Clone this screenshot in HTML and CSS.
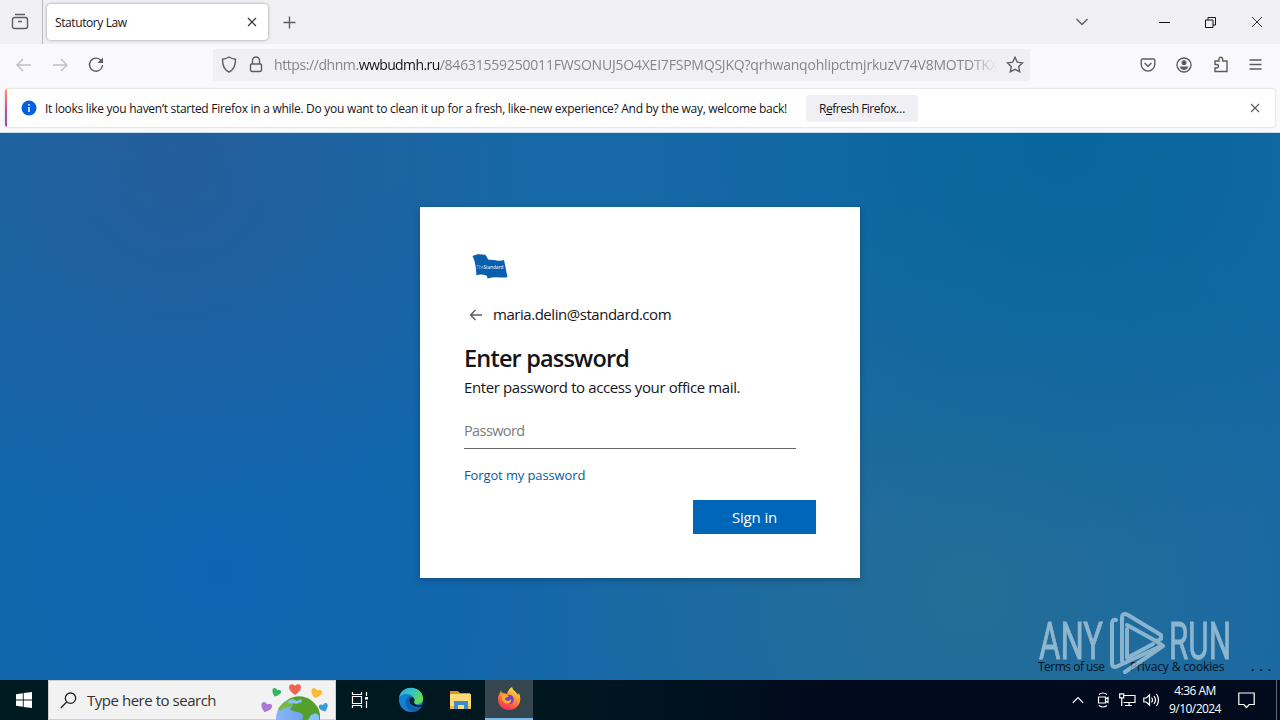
FILE: index.html
```html
<!DOCTYPE html>
<html lang="en">
<head>
<meta charset="utf-8">
<title>Desktop</title>
<link rel="stylesheet" href="styles.css">
</head>
<body>
<div class="desktop">
  <div class="tabbar">
    <div class="firefox-view"><svg class="ico" width="18" height="18" viewBox="0 0 18 18"><path d="M4 1.5h10M3.500 4.500h11a2 2 0 0 1 2 2v7a2 2 0 0 1-2 2h-11a2 2 0 0 1-2-2v-7a2 2 0 0 1 2-2zM7 8.500h4"/></svg></div>
    <div class="tab"><span class="tab-title">Statutory Law</span><svg class="ico dark" width="10" height="10" viewBox="0 0 10 10"><path d="M1 1l8 8M9 1l-8 8"/></svg></div>
    <svg class="ico new-tab" width="13" height="13" viewBox="0 0 13 13"><path d="M6.500 .5v12M.5 6.500h12"/></svg>
    <div class="window-controls">
      <svg class="ico" width="14" height="10" viewBox="0 0 14 10"><path d="M1.500 2l5.500 5.500L12.500 2"/></svg>
      <svg class="ico black min" width="11" height="11" viewBox="0 0 11 11"><path d="M0 5.500h11"/></svg>
      <svg class="ico black" width="11" height="11" viewBox="0 0 11 11"><path d="M.5 3h7.500v7.500H.5zM3 3V.5h7.500V8H8"/></svg>
      <svg class="ico thin" width="12" height="12" viewBox="0 0 12 12"><path d="M1 1l10 10M11 1L1 11"/></svg>
    </div>
  </div>

  <div class="toolbar">
    <svg class="ico faded" width="16" height="14" viewBox="0 0 16 14"><path d="M15 7H1.500M7 1L1 7l6 6"/></svg>
    <svg class="ico faded forward" width="16" height="14" viewBox="0 0 16 14"><path d="M1 7h13.500M9 1l6 6-6 6"/></svg>
    <svg class="ico reload" width="16" height="16" viewBox="0 0 16 16"><path d="M13 3.500A6.500 6.500 0 1 0 14.500 8"/><path class="fill" d="M15 .5v5.500H9.500z"/></svg>
    <div class="urlbar">
      <svg class="ico" width="16" height="17" viewBox="0 0 16 17"><path d="M8 1c2 1.300 4 2 6.500 2.300C14.600 10 12.500 14 8 16 3.500 14 1.400 10 1.500 3.300 4 3 6 2.300 8 1z"/></svg>
      <svg class="ico lock" width="14" height="17" viewBox="0 0 14 17"><path d="M3.500 8V4.500a3.500 3.500 0 0 1 7 0V8M2.500 8h9a1 1 0 0 1 1 1v5a1.500 1.500 0 0 1-1.500 1.500H3A1.500 1.500 0 0 1 1.500 14V9a1 1 0 0 1 1-1z"/></svg>
      <div class="url"><span class="scheme">https://dhnm.</span><b>wwbudmh.ru</b>/84631559250011FWSONUJ5O4XEI7FSPMQSJKQ?qrhwanqohlipctmjrkuzV74V8MOTDTKXX</div>
      <svg class="ico" width="18" height="17" viewBox="0 0 18 17"><path d="M9 1.300l2.300 4.900 5.200.7-3.800 3.700 1 5.200L9 13.300l-4.700 2.500 1-5.200L1.500 6.900l5.200-.7z"/></svg>
    </div>
    <div class="tools">
      <svg class="ico" width="16" height="14" viewBox="0 0 16 14"><path d="M2.500 1h11a1.300 1.300 0 0 1 1.300 1.300v4A6.700 6.700 0 0 1 1.200 6.300v-4A1.300 1.300 0 0 1 2.500 1zM4.500 5L8 8.300 11.500 5"/></svg>
      <svg class="ico" width="16" height="16" viewBox="0 0 16 16"><circle cx="8" cy="8" r="7"/><circle class="fill" cx="8" cy="5.800" r="2.500"/><path class="fill" d="M3.600 9.500h8.800c-.5 2.300-2.300 3.500-4.400 3.500s-3.900-1.200-4.400-3.500z"/></svg>
      <svg class="ico" width="16" height="17" viewBox="0 0 16 17"><path d="M2 5h4V3a1.800 1.800 0 0 1 3.600 0v2H14v10.500H2V12h1.700a1.700 1.700 0 0 0 0-3.500H2z"/></svg>
      <svg class="ico" width="13" height="11" viewBox="0 0 13 11"><path d="M.5 1h12M.5 5.500h12M.5 10h12"/></svg>
    </div>
  </div>

  <div class="notice-area">
    <div class="notice">
      <svg class="info" width="16" height="16" viewBox="0 0 16 16"><circle cx="8" cy="8" r="7.500" fill="#0560df"/><path d="M8 7v5M8 4v1.600" stroke="#fff" stroke-width="1.500"/></svg>
      <span class="notice-text">It looks like you haven’t started Firefox in a while. Do you want to clean it up for a fresh, like-new experience? And by the way, welcome back!</span>
      <div class="refresh"><span>R<u>e</u>fresh Firefox…</span></div>
      <svg class="ico notice-close" width="10" height="10" viewBox="0 0 10 10"><path d="M1 1l8 8M9 1L1 9"/></svg>
    </div>
  </div>

  <div class="page">
    <div class="card">
      <svg class="flag" width="36" height="25" viewBox="0 0 36 25"><path fill="#0b5dad" d="M.5 2C6-1 9 .5 13 .8c2 1 1.500 3 3.500 5C22 5 27 8 32 6L35.500 23c-5 1.700-11-1.500-20 1.500l-.6-2.800C10 20 7 20 4.500 21.500 4 14 3.500 8 .5 2z"/><text x="4.500" y="14.500" font-size="5" textLength="7" lengthAdjust="spacingAndGlyphs" fill="#9fc4e6">The</text><text x="11.500" y="14.500" font-size="6" textLength="20" lengthAdjust="spacingAndGlyphs" fill="#fff">Standard</text></svg>
      <div class="identity">
        <svg class="ico" width="14" height="12" viewBox="0 0 14 12"><path d="M13 6H1.500M6.500 1l-5 5 5 5"/></svg>
        <span class="email">maria.delin@standard.com</span>
      </div>
      <div class="heading"><span>Enter password</span></div>
      <div class="desc"><span>Enter password to access your office mail.</span></div>
      <div class="field"><span>Password</span></div>
      <div class="forgot"><span>Forgot my password</span></div>
      <div class="signin"><span>Sign in</span></div>
    </div>
    <div class="footer"><span class="terms">Terms of use</span><span class="privacy">Privacy &amp; cookies</span><span class="dots">...</span></div>
    <svg class="watermark" width="196" height="66" viewBox="0 0 196 66">
      <g fill="#c2d9e6" stroke="#c2d9e6" stroke-width=".9"><text x="1" y="49" font-size="52" textLength="64" lengthAdjust="spacingAndGlyphs">ANY</text><text x="131" y="49" font-size="52" textLength="62" lengthAdjust="spacingAndGlyphs">RUN</text></g>
      <g fill="none" stroke="#bdd6e5" stroke-width="4" stroke-linejoin="round" stroke-linecap="round"><path d="M78 10q-4-1-4 4v39q0 6 6 3l43-20"/><path d="M84 51V8q0-6 6-3l33 20v4l-5 2L89 15"/><path d="M89 19v29l26-14"/><path d="M118 31l7 5-38 26"/></g>
    </svg>
  </div>

  <div class="taskbar">
    <div class="start"><svg width="16" height="16" viewBox="0 0 16 16"><path fill="#fff" d="M0 2.200L6.800 1.200v6.300H0zM7.700 1.100L16 0v7.500H7.700zM0 8.400h6.800v6.400L0 13.800zM7.700 8.400H16V16l-8.300-1.100z"/></svg></div>
    <div class="search">
      <svg class="mag" width="17" height="17" viewBox="0 0 17 17"><circle cx="10.500" cy="6.200" r="5.200"/><path d="M6.700 10L.8 16"/></svg>
      <span>Type here to search</span>
      <svg class="earth" width="74" height="39" viewBox="0 0 74 39">
        <defs><path id="heart" d="M0 5C-4 2-6 0-6-3-6-6-2-7 0-4 2-7 6-6 6-3 6 0 4 2 0 5z"/><linearGradient id="sea"><stop offset="0" stop-color="#8bb6f7"/><stop offset="1" stop-color="#5f94e8"/></linearGradient></defs>
        <circle cx="37" cy="38" r="22" fill="url(#sea)"/>
        <path fill="#559f2c" d="M27 19c6-5 17-5 24 1 5 4 8 9 8 15v4H41c2-3 1-5-1-7-4-2-9-1-11-4l3-3-2-2-5 1-2-1z"/><path fill="#75ba3d" d="M22 22l8-4 5 2-4 5-8 2-4 3-2-2z"/><path fill="#86c2f4" d="M27 20l5-2 4 2 4-2 1 3-6 2-3-1-4 1zM47 39l3-5 5-2 3 3v4z"/>
        <use href="#heart" x="34" y="9" fill="#ed6552"/><use href="#heart" transform="translate(15 12) rotate(22) scale(.75)" fill="#35b564"/><use href="#heart" transform="translate(55 13) rotate(18) scale(.9)" fill="#f5bd32"/><use href="#heart" transform="translate(5 27) rotate(18) scale(.9)" fill="#ad78d2"/><use href="#heart" transform="translate(63 27) rotate(-20) scale(.75)" fill="#3a9bdc"/>
      </svg>
    </div>
    <div class="app"><svg class="white taskview" width="18" height="16" viewBox="0 0 18 16"><path d="M1.500 0v2.500h9V0M1.500 16v-2.500h9V16M1.500 4.500h9v7h-9zM15.500 0v4M15.500 9v7"/><path class="wfill" d="M14 5h3v2.500h-3z"/></svg></div>
    <div class="app edge"><svg width="26" height="26" viewBox="0 0 26 26"><defs><linearGradient id="eg" x1="0" y1="0" x2="1" y2=".5"><stop offset="0" stop-color="#28a9df"/><stop offset=".55" stop-color="#35c3c1"/><stop offset="1" stop-color="#64dc4d"/></linearGradient></defs><circle cx="13" cy="13" r="12" fill="#1381d2"/><path fill="url(#eg)" d="M1 11C3-3 24-2 25 11c.4 5-4 7-8 6-3-.7-1-2-1-4 0-7-12-8-15-2z"/><path fill="#1261b0" d="M10 10c-5 5-2 13 5 15 4-.3 7-2 9-6-6 3-12 1-13-4 0-2 1-4 3-5-1-1-3-1-4 0z"/><path fill="#06243a" d="M12 11c3-2 6 1 4 4 0 3 5 4 8 2.500 0 .7-.5 1.500-1 2-6 2-14-2-11-8.500z"/></svg></div>
    <div class="app"><svg width="23" height="20" viewBox="0 0 23 20"><path fill="#d9951e" d="M1 1h8l2 2h10v5H1z"/><path fill="#fdda75" d="M1 4h21v15H1z"/><path fill="#3c8dcc" d="M5 11h14v8h-4v-4H9v4H5z"/><path fill="#f6bd40" d="M1 16h4v3H1zM19 16h3v3h-3z"/></svg></div>
    <div class="app active"><svg width="24" height="24" viewBox="0 0 24 24"><defs><linearGradient id="ff" x1=".8" y1="0" x2=".3" y2="1"><stop offset="0" stop-color="#fff04c"/><stop offset=".45" stop-color="#ff9328"/><stop offset="1" stop-color="#f52762"/></linearGradient></defs><path fill="url(#ff)" d="M4 3c0 2 1 3 2 3l4 1c1-3 2-5 5-7 1 4 4 4 6 8l1-2c4 10-2 17-10 17C5 23 1 18 1 12c0-4 2-5 3-9z"/><circle cx="12" cy="12.500" r="4.800" fill="#7340d6"/><path fill="#ffab2d" d="M5 8c3-1 5 0 7 1-1 2-4 1-4 3 1 3 5 2 6 0 1 4-3 6-6 4-2-1-4-4-3-8z"/></svg></div>
    <div class="tray">
      <svg class="white" width="12" height="8" viewBox="0 0 12 8"><path d="M.8 6.800L6 1.500l5.200 5.300"/></svg>
      <svg class="white camera" width="13" height="16" viewBox="0 0 13 16"><path d="M2 2.500q4-3 8 0M2 13.500q4 3 8 0M1.500 5h7v6h-7zM8.500 7L11 5.500v5L8.500 9"/></svg>
      <svg class="white net" width="17" height="14" viewBox="0 0 17 14"><path d="M5 2.500h11v7H4.500M10 9.500v3M6 12.500h7M.7.800h4v4h-4zM2.700 5v8"/></svg>
      <svg class="white sound" width="17" height="14" viewBox="0 0 17 14"><path d="M.8 5h2.500L6.500 2v10L3.300 9H.8zM8.500 4.500q2 2.500 0 5M11 3q3 4 0 8M13.500 1q4 6 0 12"/></svg>
      <div class="clock"><span>4:36 AM</span><span class="date">9/10/2024</span></div>
      <svg class="white chat" width="17" height="17" viewBox="0 0 17 17"><path d="M.8 1h15.400v11.500h-5L8.500 15.500l-2.700-3h-5z"/></svg>
    </div>
  </div>
</div>
</body>
</html>
```
FILE: styles.css
```css
* { box-sizing: border-box; }
body { margin: 0; }
.desktop { width: 1280px; height: 720px; display: flex; flex-direction: column; overflow: hidden; font-family: "Open Sans", "Noto Sans", sans-serif; color: #15141a; white-space: nowrap; }
svg { flex: none; display: block; }
.ico { fill: none; stroke: #5b5b66; stroke-width: 1.4; }
.ico .fill { fill: #5b5b66; stroke: none; }
.ico.dark { stroke: #333; stroke-width: 1.2; }
.ico.black { stroke: #111; stroke-width: 1; }
.ico.thin { stroke: #333; stroke-width: 1; }
.ico.faded { stroke: #bfbfc5; }

.tabbar { height: 44px; flex: none; background: #f0f0f4; display: flex; align-items: center; }
.firefox-view { width: 43px; height: 44px; border-right: 1px solid #b8b8bf; padding: 13px 0 0 11px; }
.tab { width: 221px; height: 36px; margin-left: 4px; background: #fff; border-radius: 4px; box-shadow: 0 0 3px rgba(0,0,0,.4); display: flex; align-items: center; justify-content: space-between; padding: 0 11px 0 8px; font-size: 12px; }
.tab-title { letter-spacing: -.4px; padding-top: 1px; }
.new-tab { margin-left: 15px; }
.window-controls { margin-left: auto; display: flex; align-items: center; padding-right: 17px; }
.min { margin: 0 35px 0 70px; }
.window-controls .thin { margin-left: 35px; }

.toolbar { height: 40px; flex: none; background: #f9f9fb; display: flex; align-items: center; padding: 1px 0 0 16px; }
.forward { margin-left: 20px; }
.reload { margin-left: 20px; }
.urlbar { width: 817px; height: 32px; margin-left: 109px; background: #f0f0f4; border-radius: 2px; display: flex; align-items: center; padding: 0 6px 0 8px; }
.lock { margin: 0 11px 0 12px; }
.url { flex: 1; min-width: 0; overflow: hidden; font-size: 14px; color: #85858c; letter-spacing: -.21px; -webkit-mask-image: linear-gradient(to right, #000 694px, transparent 724px); mask-image: linear-gradient(to right, #000 694px, transparent 724px); margin-right: 7px; }
.scheme { letter-spacing: -.42px; }
.url b { font-weight: 400; color: #15141a; letter-spacing: -.6px; }
.tools { margin-left: auto; display: flex; align-items: center; gap: 20.500px; padding-right: 18px; }

.notice-area { height: 49px; flex: none; background: #f9f9fb; padding: 5px; border-bottom: 1px solid #c4e0eb; }
.notice { height: 38px; background: linear-gradient(#ff9a5a, #d64a9b 50%, #8052b4) left / 2px 100% no-repeat #fff; border-radius: 3px; box-shadow: 0 0 2px rgba(0,0,0,.25); display: flex; align-items: center; padding: 0 15px 0 16px; font-size: 12px; }
.notice-text { margin-left: 8px; width: 761px; letter-spacing: -.283px; }
.refresh { width: 112px; height: 27px; background: #f0f0f4; border-radius: 3px; display: flex; align-items: center; justify-content: center; letter-spacing: -.5px; }
.notice-close { margin-left: auto; stroke-width: 1.1; }

.page { position: relative; flex: 1; background: radial-gradient(circle at 175px 40px, rgba(40,90,152,.8), transparent 350px), radial-gradient(circle at 1060px 10px, rgba(5,101,155,.85), transparent 420px), radial-gradient(circle at 970px 460px, rgba(38,110,148,.85), transparent 430px), radial-gradient(circle at 220px 440px, rgba(13,100,178,.9), transparent 450px), #1768a6; }
.card { width: 440px; height: 371px; margin: 74px auto 0; background: #fff; padding: 47px 44px 0; display: flex; flex-direction: column; box-shadow: 0 2px 6px rgba(0,0,0,.25); }
.flag { margin-left: 8px; }
.identity { height: 24px; margin-top: 24px; padding-left: 5px; display: flex; align-items: center; font-size: 15px; }
.email { margin-left: 10px; letter-spacing: -.46px; padding-bottom: 2px; }
.heading { height: 32px; margin-top: 15px; font-size: 23.500px; line-height: 32px; font-weight: 600; letter-spacing: -.82px; }
.desc { height: 22px; margin-top: 2px; font-size: 15px; line-height: 22px; letter-spacing: -.39px; }
.field { width: 332px; height: 36px; margin-top: 15px; border-bottom: 1px solid #666; font-size: 14.500px; line-height: 36px; color: #7c7c7c; letter-spacing: -.6px; }
.forgot { height: 20px; margin-top: 16px; font-size: 13px; line-height: 20px; color: #0b5a9b; letter-spacing: -.12px; }
.signin { width: 123px; height: 34px; margin: 15px 0 0 auto; background: #0067b8; color: #fff; font-size: 15px; line-height: 35px; letter-spacing: -.15px; text-align: center; }
.footer { position: absolute; left: 1038px; top: 525px; display: flex; font-size: 12px; line-height: 18px; color: #071421; }
.terms { width: 92px; letter-spacing: -.5px; }
.privacy { width: 121px; letter-spacing: -.13px; }
.dots { font-size: 12px; line-height: 18px; letter-spacing: 5px; font-weight: 700; }
.watermark { position: absolute; left: 1038px; top: 477px; opacity: .68; font-family: Roboto, sans-serif; }

.taskbar { height: 40px; flex: none; background: linear-gradient(90deg, #001a21, #001720 45%, #010a1d 65%, #020b1c); display: flex; }
.start { width: 48px; display: flex; align-items: center; justify-content: center; }
.search { width: 288px; border: 1px solid #cecece; background: #f2f2f2; display: flex; align-items: center; padding-left: 11px; font-size: 15px; color: #333; }
.mag { fill: none; stroke: #222; stroke-width: 1.300; }
.search span { width: 174px; margin-left: 10px; letter-spacing: -.47px; }
.app { width: 48px; margin-left: 1px; display: flex; align-items: center; justify-content: center; }
.taskview { margin-right: 2px; }
.edge { margin-left: 2px; }
.active { background: #35464f; border-bottom: 2px solid #76b9ed; }
.white { fill: none; stroke: #fff; stroke-width: 1.200; }
.white .wfill { fill: #fff; stroke: none; }
.tray { margin-left: auto; margin-right: 3px; width: 205px; display: flex; align-items: center; color: #fff; border-right: 1px solid #5c6573; }
.camera { margin-left: 13px; }
.net { margin-left: 9px; }
.sound { margin-left: 7px; }
.clock { width: 64px; margin-left: 3px; display: flex; flex-direction: column; align-items: center; font-size: 12px; line-height: 18px; letter-spacing: -.55px; }
.chat { margin-left: 11px; }
```
